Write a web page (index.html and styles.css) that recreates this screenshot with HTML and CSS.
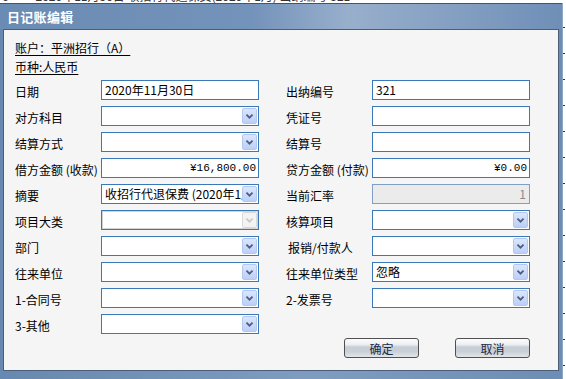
FILE: index.html
```html
<!DOCTYPE html>
<html lang="zh-CN">
<head>
    <meta charset="UTF-8">
    <title>日记账编辑</title>
    <link rel="stylesheet" href="styles.css">
</head>
<body>
    <div class="behind"><span>6&nbsp;&nbsp;&nbsp;&nbsp;&nbsp;&nbsp;&nbsp;&nbsp;&nbsp;&nbsp;2020年11月30日&nbsp;收招行代退保费(2020年1月)&nbsp;出纳编号&nbsp;321</span></div>
    <div class="screen">
        <div class="window">
            <div class="titlebar"><span class="title">日记账编辑</span></div>
            <div class="client">
                <div class="info">
                    <p class="acct">账户：平洲招行（A）</p>
                    <p class="acct">币种:人民币</p>
                </div>
                <div class="form">
                    <div class="col">
                        <label>日期</label>
                        <div class="ctl"><span class="val">2020年11月30日</span></div>

                        <label>对方科目</label>
                        <div class="ctl combo"><span class="val"></span><span class="arrow"><svg viewBox="0 0 15 16"><path d="M4 6.5 L7.5 10 L11 6.5"/></svg></span></div>

                        <label>结算方式</label>
                        <div class="ctl combo"><span class="val"></span><span class="arrow"><svg viewBox="0 0 15 16"><path d="M4 6.5 L7.5 10 L11 6.5"/></svg></span></div>

                        <label>借方金额 (收款)</label>
                        <div class="ctl money"><span class="val">¥16,800.00</span></div>

                        <label>摘要</label>
                        <div class="ctl combo"><span class="val">收招行代退保费 (2020年1月)</span><span class="arrow"><svg viewBox="0 0 15 16"><path d="M4 6.5 L7.5 10 L11 6.5"/></svg></span></div>

                        <label>项目大类</label>
                        <div class="ctl combo disabled"><span class="val"></span><span class="arrow"><svg viewBox="0 0 15 16"><path d="M4 6.5 L7.5 10 L11 6.5"/></svg></span></div>

                        <label>部门</label>
                        <div class="ctl combo"><span class="val"></span><span class="arrow"><svg viewBox="0 0 15 16"><path d="M4 6.5 L7.5 10 L11 6.5"/></svg></span></div>

                        <label>往来单位</label>
                        <div class="ctl combo"><span class="val"></span><span class="arrow"><svg viewBox="0 0 15 16"><path d="M4 6.5 L7.5 10 L11 6.5"/></svg></span></div>

                        <label>1-合同号</label>
                        <div class="ctl combo"><span class="val"></span><span class="arrow"><svg viewBox="0 0 15 16"><path d="M4 6.5 L7.5 10 L11 6.5"/></svg></span></div>

                        <label>3-其他</label>
                        <div class="ctl combo"><span class="val"></span><span class="arrow"><svg viewBox="0 0 15 16"><path d="M4 6.5 L7.5 10 L11 6.5"/></svg></span></div>
                    </div>
                    <div class="col">
                        <label>出纳编号</label>
                        <div class="ctl"><span class="val">321</span></div>

                        <label>凭证号</label>
                        <div class="ctl"><span class="val"></span></div>

                        <label>结算号</label>
                        <div class="ctl"><span class="val"></span></div>

                        <label>贷方金额 (付款)</label>
                        <div class="ctl money"><span class="val">¥0.00</span></div>

                        <label>当前汇率</label>
                        <div class="ctl readonly"><span class="val">1</span></div>

                        <label>核算项目</label>
                        <div class="ctl combo"><span class="val"></span><span class="arrow"><svg viewBox="0 0 15 16"><path d="M4 6.5 L7.5 10 L11 6.5"/></svg></span></div>

                        <label class="indent">报销/付款人</label>
                        <div class="ctl combo"><span class="val"></span><span class="arrow"><svg viewBox="0 0 15 16"><path d="M4 6.5 L7.5 10 L11 6.5"/></svg></span></div>

                        <label>往来单位类型</label>
                        <div class="ctl combo"><span class="val">忽略</span><span class="arrow"><svg viewBox="0 0 15 16"><path d="M4 6.5 L7.5 10 L11 6.5"/></svg></span></div>

                        <label>2-发票号</label>
                        <div class="ctl combo"><span class="val"></span><span class="arrow"><svg viewBox="0 0 15 16"><path d="M4 6.5 L7.5 10 L11 6.5"/></svg></span></div>

                        <div class="buttons">
                            <button class="btn">确定</button>
                            <button class="btn">取消</button>
                        </div>
                    </div>
                </div>
            </div>
        </div>
        <div class="sidebg"></div>
    </div>
</body>
</html>
```

FILE: styles.css
```css
body { margin: 0; padding: 0; background: #fff; font-family: "Noto Sans CJK SC", "Liberation Sans", sans-serif; font-size: 12px; color: #000; width: 566px; height: 379px; overflow: hidden; }
.behind { height: 3px; overflow: hidden; background: #fff; white-space: nowrap; font-size: 12px; line-height: 14px; }
.behind span { display: block; margin-top: -11px; padding-left: 2px; color: #333; }
.screen { display: flex; height: 376px; }
.window { width: 562px; box-sizing: border-box; display: flex; flex-direction: column; padding: 0 3px 8px 3px; background: linear-gradient(90deg, #6788b0, #7f9cc0 55%, #6d8db5); border-top: 1px solid #3e5672; }
.titlebar { height: 25px; display: flex; align-items: center; margin: 0 -3px; padding-left: 7px; background: linear-gradient(90deg, #6a8bb3 0%, #7493ba 45%, #98afcc 62%, #8aa4c5 75%, #6f8fb7 100%); }
.title { color: #fff; font-weight: bold; font-size: 13px; letter-spacing: 0.3px; }
.client { flex: 1; background: #f5f5f5; border: 1px solid #4a5e78; padding: 8px 0 0 11px; }
.info { margin-bottom: 4px; }
.acct { margin: 0; line-height: 19px; text-decoration: underline; text-underline-offset: 2px; }
.form { display: flex; gap: 27px; }
.col { display: grid; grid-template-columns: 86px 158px; grid-auto-rows: 20px; row-gap: 6px; align-items: center; }
.col label { white-space: nowrap; padding-top: 2px; }
.col label.indent { padding-left: 2px; }
.ctl { height: 20px; box-sizing: border-box; border: 1px solid #3a78b8; background: #fff; display: flex; align-items: center; padding: 0 0 0 3px; }
.val { flex: 1; min-width: 0; overflow: hidden; white-space: nowrap; line-height: 16px; }
.money .val { text-align: right; padding-right: 2px; font-family: "Liberation Mono", "Noto Sans CJK SC", monospace; font-size: 11px; }
.readonly { background: #ebebeb; border-color: #7f9fc4; }
.readonly .val { text-align: right; color: #8a8a8a; padding-right: 3px; }
.combo { padding-right: 1px; }
.arrow { width: 15px; height: 16px; box-sizing: border-box; flex: none; border: 1px solid #b3c8f0; border-radius: 2px; background: linear-gradient(180deg, #dbe6fc, #bccff7); display: flex; }
.arrow svg { width: 13px; height: 14px; }
.arrow path { fill: none; stroke: #4b5d80; stroke-width: 2; }
.disabled { box-shadow: inset 0 0 0 1px #d2d2d2; }
.disabled .arrow { background: #f3f3f3; border-color: #dadada; }
.disabled .arrow path { stroke: #c9c9c9; }
.buttons { grid-column: 1 / 3; align-self: start; display: flex; justify-content: flex-end; gap: 36px; margin-top: 24px; }
.btn { width: 75px; height: 20px; padding: 0; font-family: "Noto Sans CJK SC", sans-serif; font-size: 12px; color: #1c2b46; border: 1px solid #505050; border-radius: 3px; background: linear-gradient(180deg, #fbfbfb 0%, #eef0f2 30%, #c7ced6 45%, #c9d0d7 70%, #e3e6e9 100%); }
.sidebg { flex: 1; background: repeating-linear-gradient(180deg, #fff 0, #fff 24px, #333 24px, #333 25px, #fff 25px, #fff 26px); background-size: 2px 26px; background-repeat: repeat-y; background-color: #fff; border-left: 1px solid #8ea7c4; }
```
